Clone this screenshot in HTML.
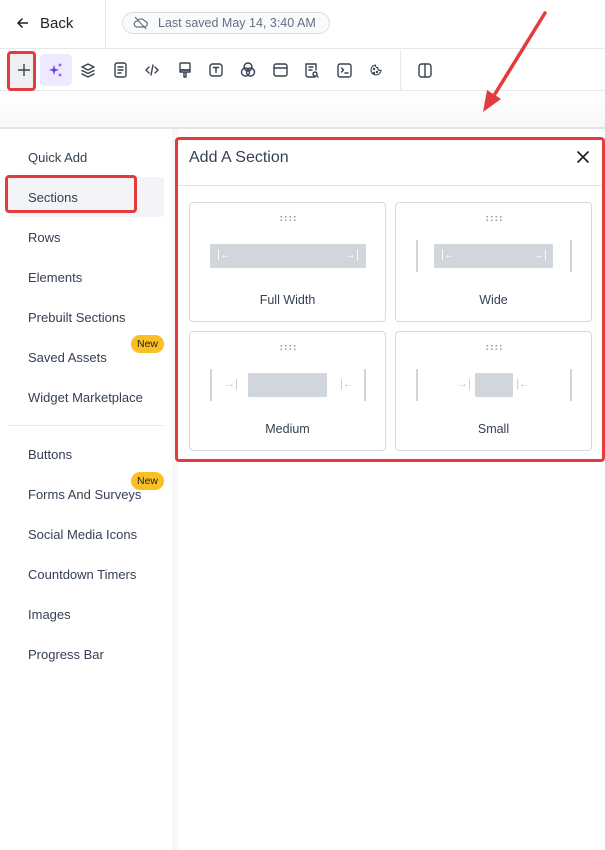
<!DOCTYPE html><html><head><style>
*{box-sizing:border-box;margin:0;padding:0}
body{width:605px;height:850px;overflow:hidden;background:#fff;font-family:"Liberation Sans",sans-serif;color:#2d3748;position:relative}
.a{position:absolute}
.nav{left:28px;font-size:13px;color:#344054}
.card{position:absolute;width:197px;height:120px;border:1px solid #d5d9e0;border-radius:4px;background:#fff}
.card .lbl{position:absolute;top:90px;width:100%;text-align:center;font-size:12.5px;color:#344054}
.dots{position:absolute;top:12px;left:50%;margin-left:-9px;width:18px;height:6px;background-image:radial-gradient(circle,#9aa3b1 0.8px,transparent 1.1px);background-size:4.5px 3.5px}
.bar{position:absolute;top:41px;height:24px;background:#d1d5dc;border-radius:1px}
.vl{position:absolute;top:37px;width:2px;height:32px;background:#d1d5dc}
.ic{position:absolute;top:61px}
</style></head><body>
<!-- header -->
<div class="a" style="left:0;top:0;width:605px;height:49px;border-bottom:1px solid #e5e7eb"></div>
<div class="a" style="left:105px;top:0;width:1px;height:48px;background:#e5e7eb"></div>
<svg class="a" style="left:16px;top:16px" width="14" height="14" viewBox="0 0 14 14"><path d="M12 7H2M6.5 2.5L2 7l4.5 4.5" stroke="#222" stroke-width="1.5" fill="none"/></svg>
<div class="a" style="left:40px;top:15px;font-size:15px;color:#222">Back</div>
<div class="a" style="left:122px;top:12px;width:208px;height:22px;border:1px solid #d9dde3;border-radius:11px;background:#f9fafb"></div>
<svg class="a" style="left:133px;top:16px" width="15" height="14" viewBox="0 0 15 14"><path d="M4 11h7a3 3 0 0 0 .5-6A4 4 0 0 0 4.5 5 3 3 0 0 0 4 11z" stroke="#6b7280" stroke-width="1.2" fill="none"/><path d="M2 1l11 12" stroke="#6b7280" stroke-width="1.2"/></svg>
<div class="a" style="left:158px;top:16px;font-size:12.5px;color:#667085">Last saved May 14, 3:40 AM</div>
<!-- toolbar -->
<div class="a" style="left:0;top:90px;width:605px;height:1px;background:#e5e7eb"></div>
<div class="a" style="left:400px;top:50px;width:1px;height:40px;background:#e5e7eb"></div>
<div class="a" style="left:7px;top:51px;width:29px;height:40px;border:3px solid #e43c3c;border-radius:4px;background:#eef0f4"></div>
<svg class="a" style="left:17px;top:63px" width="14" height="14"><path d="M7 1v12M1 7h12" stroke="#374151" stroke-width="1.4"/></svg>
<div class="a" style="left:40px;top:54px;width:32px;height:32px;border-radius:5px;background:#ede9fe"></div>
<svg class="a" style="left:48px;top:62px" width="16" height="16" viewBox="0 0 16 16" fill="#7c3aed"><path d="M6 3l1.2 3.8L11 8l-3.8 1.2L6 13l-1.2-3.8L1 8l3.8-1.2z"/><path d="M12 1l.6 1.4L14 3l-1.4.6L12 5l-.6-1.4L10 3l1.4-.6zM12 11l.6 1.4 1.4.6-1.4.6L12 15l-.6-1.4-1.4-.6 1.4-.6z"/></svg>
<svg class="a" style="left:78px;top:60px" width="370" height="20" viewBox="0 0 370 20" fill="none" stroke="#374151" stroke-width="1.4" stroke-linejoin="round" stroke-linecap="round">
<g transform="translate(3,3)"><path d="M7 1l6 3-6 3-6-3z"/><path d="M1 7.5l6 3 6-3M1 11l6 3 6-3"/></g>
<g transform="translate(36,3)"><rect x="1" y="0" width="11" height="14" rx="2"/><path d="M4 4h5M4 7h5M4 10h3"/></g>
<g transform="translate(67,3)"><path d="M4 4L1 7l3 3M10 4l3 3-3 3M8 2l-2 10"/></g>
<g transform="translate(100,2)"><rect x="2" y="1" width="10" height="7" rx="1"/><path d="M2 8h10v2H2zM6 10v5h2v-5"/></g>
<g transform="translate(131,3)"><rect x="1" y="1" width="12" height="12" rx="2.5"/><path d="M4.5 4.5h5M7 4.5v5"/></g>
<g transform="translate(163,2)"><circle cx="7" cy="5" r="4"/><circle cx="4.5" cy="10" r="4"/><circle cx="9.5" cy="10" r="4"/></g>
<g transform="translate(195,3)"><rect x="1" y="1" width="13" height="12" rx="2"/><path d="M1 5h13"/></g>
<g transform="translate(227,3)"><path d="M10 14H3a2 2 0 0 1-2-2V1h10v6"/><path d="M4 4h4M4 7h3"/><circle cx="10" cy="11" r="2"/><path d="M11.5 12.5l1.5 1.5"/></g>
<g transform="translate(259,3)"><rect x="1" y="1" width="13" height="13" rx="2"/><path d="M4.5 5l2 2-2 2M8 10h3"/></g>
<g transform="translate(291,3)"><path d="M12 7a5 5 0 1 1-5.5-5 2 2 0 0 0 2.5 2.5A2 2 0 0 0 12 7z" stroke-width="1.1"/><circle cx="5" cy="6" r=".5"/><circle cx="8" cy="9" r=".5"/><circle cx="5" cy="10" r=".5"/></g>
<g transform="translate(340,3)"><rect x="1" y="1" width="12" height="13" rx="2.5"/><path d="M7 1v13"/></g>
</svg>
<!-- gradient band -->
<div class="a" style="left:0;top:91px;width:605px;height:37px;background:linear-gradient(#fff,#f7f7f8)"></div>
<div class="a" style="left:0;top:127px;width:605px;height:2px;background:#e2e4e8"></div>
<!-- arrow -->
<svg class="a" style="left:470px;top:0" width="90" height="120"><path d="M75 13L20 102" stroke="#e43c3c" stroke-width="3.5" stroke-linecap="round"/><path d="M13 112l4-22 14 9z" fill="#e43c3c"/></svg>
<!-- sidebar -->
<div class="a" style="left:172px;top:129px;width:6px;height:721px;background:#f6f7f8"></div>
<div class="a" style="left:8px;top:177px;width:156px;height:40px;background:#f2f4f7;border-radius:4px"></div>
<div class="a" style="left:5px;top:175px;width:132px;height:38px;border:3px solid #e43c3c;border-radius:4px"></div>
<div class="a nav" style="top:150px">Quick Add</div>
<div class="a nav" style="top:190px">Sections</div>
<div class="a nav" style="top:230px">Rows</div>
<div class="a nav" style="top:270px">Elements</div>
<div class="a nav" style="top:310px">Prebuilt Sections</div>
<div class="a nav" style="top:350px">Saved Assets</div>
<div class="a nav" style="top:390px">Widget Marketplace</div>
<div class="a" style="left:8px;top:425px;width:156px;height:1px;background:#e5e7eb"></div>
<div class="a nav" style="top:447px">Buttons</div>
<div class="a nav" style="top:487px">Forms And Surveys</div>
<div class="a nav" style="top:527px">Social Media Icons</div>
<div class="a nav" style="top:567px">Countdown Timers</div>
<div class="a nav" style="top:607px">Images</div>
<div class="a nav" style="top:647px">Progress Bar</div>
<div class="a" style="left:131px;top:335px;width:33px;height:18px;border-radius:9px;background:#fbbf24;font-size:10.5px;text-align:center;line-height:18px;color:#222">New</div>
<div class="a" style="left:131px;top:472px;width:33px;height:18px;border-radius:9px;background:#fbbf24;font-size:10.5px;text-align:center;line-height:18px;color:#222">New</div>
<!-- panel -->
<div class="a" style="left:178px;top:185px;width:427px;height:1px;background:#e0e3e8"></div>
<div class="a" style="left:189px;top:149px;font-size:16px;color:#344054">Add A Section</div>
<svg class="a" style="left:576px;top:150px" width="14" height="14"><path d="M1.5 1.5l11 11M12.5 1.5l-11 11" stroke="#222" stroke-width="1.7"/></svg>
<div class="a" style="left:175px;top:137px;width:430px;height:325px;border:3px solid #e43c3c;border-radius:4px"></div>

<div class="card" style="left:189px;top:202px"><div class="dots"></div><div class="bar" style="left:20px;width:156px"></div>
<div class="ic" style="top:46px;left:27px;font-size:11px;color:#fff">|←</div><div class="ic" style="top:46px;left:155px;font-size:11px;color:#fff">→|</div><div class="lbl">Full Width</div></div>
<div class="card" style="left:395px;top:202px"><div class="dots"></div><div class="vl" style="left:20px"></div><div class="vl" style="left:174px"></div><div class="bar" style="left:38px;width:119px"></div>
<div class="ic" style="top:46px;left:45px;font-size:11px;color:#fff">|←</div><div class="ic" style="top:46px;left:137px;font-size:11px;color:#fff">→|</div><div class="lbl">Wide</div></div>
<div class="card" style="left:189px;top:331px"><div class="dots"></div><div class="vl" style="left:20px"></div><div class="vl" style="left:174px"></div><div class="bar" style="left:58px;width:79px"></div>
<div class="ic" style="top:46px;left:34px;font-size:11px;color:#c4c9d2">→|</div><div class="ic" style="top:46px;left:150px;font-size:11px;color:#c4c9d2">|←</div><div class="lbl">Medium</div></div>
<div class="card" style="left:395px;top:331px"><div class="dots"></div><div class="vl" style="left:20px"></div><div class="vl" style="left:174px"></div><div class="bar" style="left:79px;width:38px"></div>
<div class="ic" style="top:46px;left:61px;font-size:11px;color:#c4c9d2">→|</div><div class="ic" style="top:46px;left:120px;font-size:11px;color:#c4c9d2">|←</div><div class="lbl">Small</div></div>
</body></html>
